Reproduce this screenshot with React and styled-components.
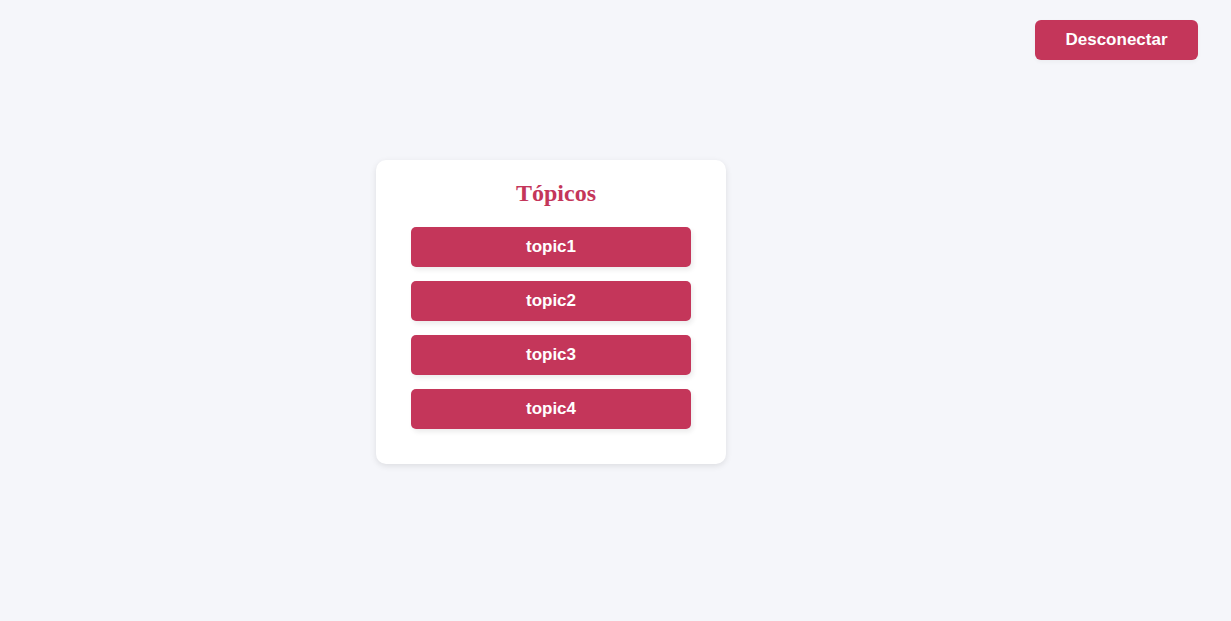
import React from "react";
import styled, { createGlobalStyle } from "styled-components";

const Global = createGlobalStyle`
  html, body { margin: 0; padding: 0; background: #f5f6fa; }
  body { font-family: "Liberation Sans", Arial, sans-serif; }
  * { box-sizing: border-box; }
`;

const Page = styled.div`
  min-height: 621px;
  display: flex;
  flex-direction: column;
`;

const Header = styled.header`
  display: flex;
  justify-content: flex-end;
  padding: 20px 33px 0 0;
`;

const LogoutButton = styled.button`
  height: 40px;
  width: 163px;
  border: none;
  border-radius: 6px;
  background: #c4365a;
  color: #fff;
  font-family: "Liberation Sans", Arial, sans-serif;
  font-weight: 700;
  font-size: 17px;
  cursor: pointer;
  box-shadow: 0 2px 4px rgba(0, 0, 0, 0.04);
`;

const Main = styled.main`
  display: flex;
  padding: 100px 0 0 376px;
`;

const Card = styled.section`
  width: 350px;
  background: #fff;
  border-radius: 10px;
  box-shadow: 0 2px 6px rgba(0, 0, 0, 0.1);
  padding: 17px 35px 35px;
  display: flex;
  flex-direction: column;
  align-items: stretch;
`;

const Title = styled.h2`
  margin: 0 0 18px;
  padding-left: 10px;
  text-align: center;
  font-family: "Liberation Serif", "Times New Roman", serif;
  font-weight: 700;
  font-size: 24px;
  line-height: 32px;
  color: #c4365a;
`;

const List = styled.div`
  display: flex;
  flex-direction: column;
  gap: 14px;
`;

const TopicButton = styled.button`
  height: 40px;
  width: 100%;
  border: none;
  border-radius: 5px;
  background: #c4365a;
  color: #fff;
  font-family: "Liberation Sans", Arial, sans-serif;
  font-weight: 700;
  font-size: 17px;
  cursor: pointer;
  box-shadow: 2px 3px 5px rgba(0, 0, 0, 0.08);
`;

const topics = ["topic1", "topic2", "topic3", "topic4"];

export default function App() {
  return (
    <Page>
      <Global />
      <Header>
        <LogoutButton>Desconectar</LogoutButton>
      </Header>
      <Main>
        <Card>
          <Title>Tópicos</Title>
          <List>
            {topics.map((t) => (
              <TopicButton key={t}>{t}</TopicButton>
            ))}
          </List>
        </Card>
      </Main>
    </Page>
  );
}
